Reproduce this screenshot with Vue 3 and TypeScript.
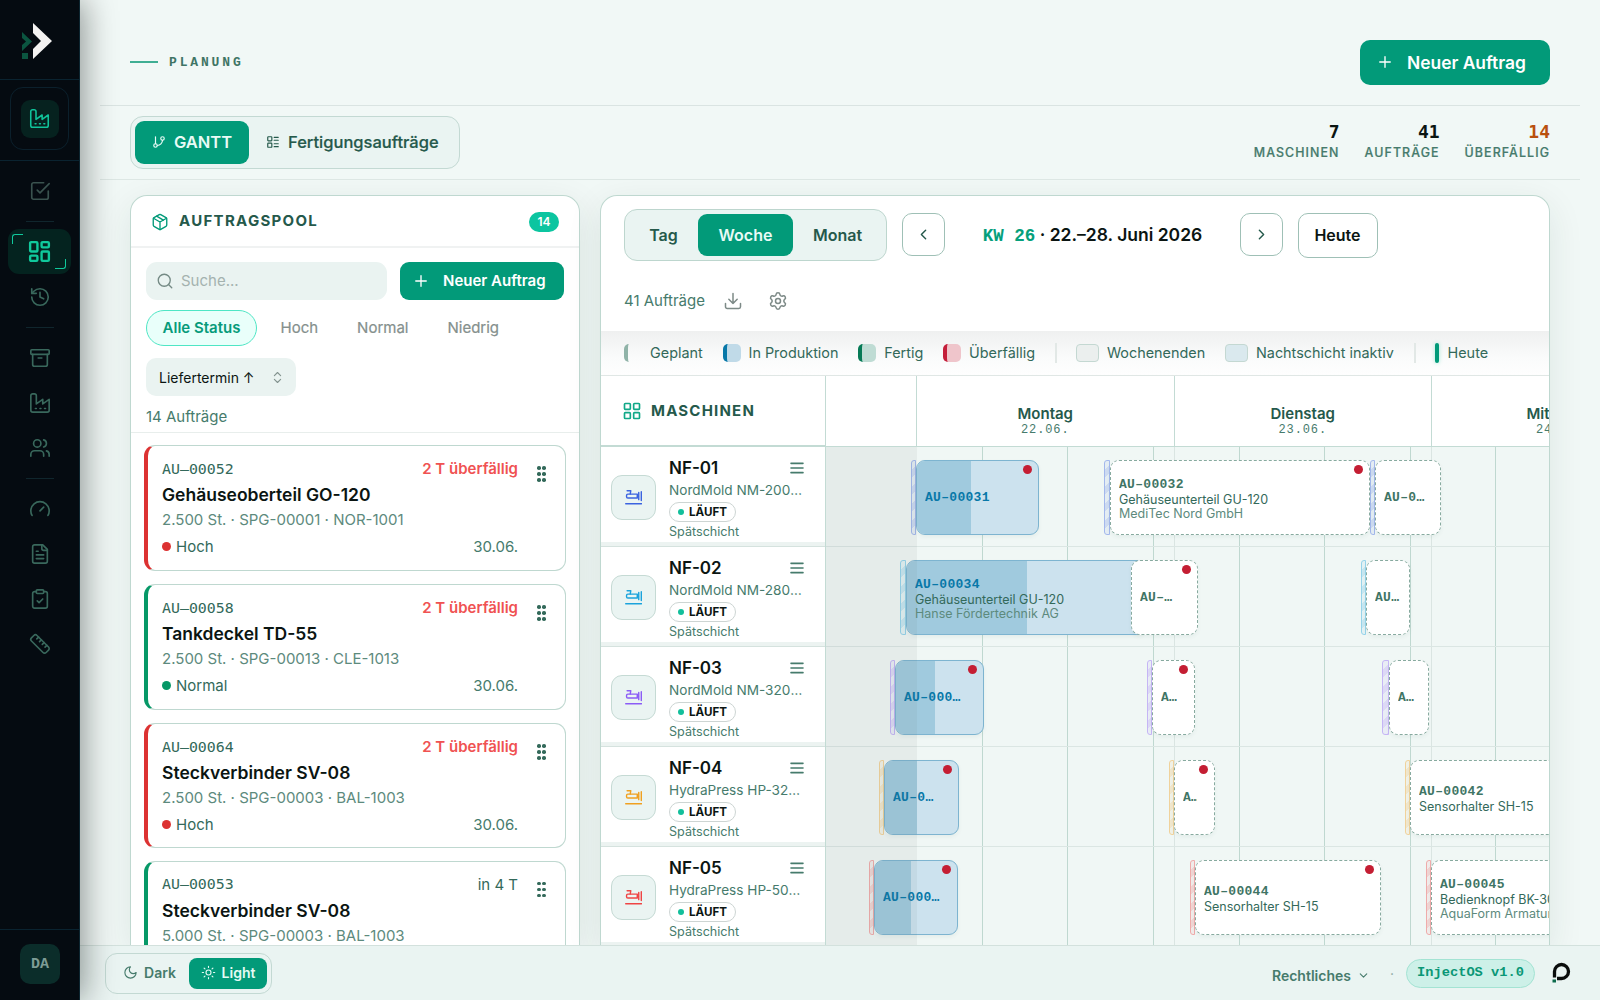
<script setup lang="ts">
import { h, type FunctionalComponent } from 'vue'

const ICONS: Record<string, string> = {
  check: '<path d="m9 11 3 3L22 4"/><path d="M21 12v7a2 2 0 0 1-2 2H5a2 2 0 0 1-2-2V5a2 2 0 0 1 2-2h11"/>',
  board: '<rect x="3" y="3" width="7" height="9" rx="1"/><rect x="14" y="3" width="7" height="5" rx="1"/><rect x="14" y="12" width="7" height="9" rx="1"/><rect x="3" y="16" width="7" height="5" rx="1"/>',
  history: '<path d="M3 12a9 9 0 1 0 9-9 9.75 9.75 0 0 0-6.74 2.74L3 8"/><path d="M3 3v5h5"/><path d="M12 7v5l4 2"/>',
  archive: '<rect x="2" y="3" width="20" height="5" rx="1"/><path d="M4 8v11a2 2 0 0 0 2 2h12a2 2 0 0 0 2-2V8"/><path d="M10 12h4"/>',
  factory: '<path d="M2 20a2 2 0 0 0 2 2h16a2 2 0 0 0 2-2V8l-7 5V8l-7 5V4a2 2 0 0 0-2-2H4a2 2 0 0 0-2 2Z"/><path d="M17 18h1M12 18h1M7 18h1"/>',
  users: '<path d="M16 21v-2a4 4 0 0 0-4-4H6a4 4 0 0 0-4 4v2"/><circle cx="9" cy="7" r="4"/><path d="M22 21v-2a4 4 0 0 0-3-3.87"/><path d="M16 3.13a4 4 0 0 1 0 7.75"/>',
  gauge: '<path d="m12 14 4-4"/><path d="M3.34 19a10 10 0 1 1 17.32 0"/>',
  file: '<path d="M15 2H6a2 2 0 0 0-2 2v16a2 2 0 0 0 2 2h12a2 2 0 0 0 2-2V7Z"/><path d="M14 2v4a2 2 0 0 0 2 2h4"/><path d="M10 9H8M16 13H8M16 17H8"/>',
  clipboard: '<rect x="8" y="2" width="8" height="4" rx="1"/><path d="M16 4h2a2 2 0 0 1 2 2v14a2 2 0 0 1-2 2H6a2 2 0 0 1-2-2V6a2 2 0 0 1 2-2h2"/><path d="m9 14 2 2 4-4"/>',
  ruler: '<path d="M21.3 15.3a2.4 2.4 0 0 1 0 3.4l-2.6 2.6a2.4 2.4 0 0 1-3.4 0L2.7 8.7a2.41 2.41 0 0 1 0-3.4l2.6-2.6a2.41 2.41 0 0 1 3.4 0Z"/><path d="m14.5 12.5 2-2M11.5 9.5l2-2M8.5 6.5l2-2M17.5 15.5l2-2"/>',
  branch: '<path d="M6 3v12"/><circle cx="18" cy="6" r="3"/><circle cx="6" cy="18" r="3"/><path d="M18 9a9 9 0 0 1-9 9"/>',
  list: '<rect x="3" y="3" width="7" height="7" rx="1"/><rect x="3" y="14" width="7" height="7" rx="1"/><path d="M14 4h7M14 9h7M14 15h7M14 20h7"/>',
  box: '<path d="m7.5 4.27 9 5.15"/><path d="M21 8a2 2 0 0 0-1-1.73l-7-4a2 2 0 0 0-2 0l-7 4A2 2 0 0 0 3 8v8a2 2 0 0 0 1 1.73l7 4a2 2 0 0 0 2 0l7-4A2 2 0 0 0 21 16Z"/><path d="m3.3 7 8.7 5 8.7-5M12 22V12"/>',
  search: '<circle cx="11" cy="11" r="8"/><path d="m21 21-4.3-4.3"/>',
  plus: '<path d="M5 12h14M12 5v14"/>',
  updown: '<path d="m7 15 5 5 5-5M7 9l5-5 5 5"/>',
  left: '<path d="m15 18-6-6 6-6"/>',
  right: '<path d="m9 18 6-6-6-6"/>',
  down: '<path d="m6 9 6 6 6-6"/>',
  download: '<path d="M21 15v4a2 2 0 0 1-2 2H5a2 2 0 0 1-2-2v-4"/><path d="m7 10 5 5 5-5M12 15V3"/>',
  gear: '<path d="M9.671 4.136a2.34 2.34 0 0 1 4.659 0 2.34 2.34 0 0 0 3.319 1.915 2.34 2.34 0 0 1 2.33 4.033 2.34 2.34 0 0 0 0 3.831 2.34 2.34 0 0 1-2.33 4.033 2.34 2.34 0 0 0-3.319 1.915 2.34 2.34 0 0 1-4.659 0 2.34 2.34 0 0 0-3.32-1.915 2.34 2.34 0 0 1-2.33-4.033 2.34 2.34 0 0 0 0-3.831A2.34 2.34 0 0 1 6.35 6.051a2.34 2.34 0 0 0 3.319-1.915"/><circle cx="12" cy="12" r="3"/>',
  grid: '<rect x="3" y="3" width="7" height="7" rx="1"/><rect x="14" y="3" width="7" height="7" rx="1"/><rect x="14" y="14" width="7" height="7" rx="1"/><rect x="3" y="14" width="7" height="7" rx="1"/>',
  menu: '<path d="M3 5h18M3 12h18M3 19h18"/>',
  moon: '<path d="M12 3a6 6 0 0 0 9 9 9 9 0 1 1-9-9Z"/>',
  sun: '<circle cx="12" cy="12" r="4"/><path d="M12 2v2M12 20v2M4.93 4.93l1.41 1.41M17.66 17.66l1.41 1.41M2 12h2M20 12h2M6.34 17.66l-1.41 1.41M19.07 4.93l-1.41 1.41"/>',
  press: '<path d="M3 2.4h5.2l-.8 4.6"/><path d="M17.4 7.200H4a1.800 1.800 0 0 0-1.800 1.800v1.800A1.800 1.800 0 0 0 4 12.600h13.400z"/><path d="M17.400 10h2.200M19.400 5v10M23 3.800v12.400M1 20.800h22.400"/>'
}

const Icon: FunctionalComponent<{ name: string; size?: number; weight?: number }> = (p) =>
  h('svg', {
    width: p.size ?? 20, height: p.size ?? 20, viewBox: '0 0 24 24', fill: 'none', stroke: 'currentColor',
    'stroke-width': p.weight ?? 2, 'stroke-linecap': 'round', 'stroke-linejoin': 'round', innerHTML: ICONS[p.name]
  })
Icon.props = ['name', 'size', 'weight']

const navGroups = [['check'], ['board', 'history'], ['archive', 'factory', 'users'], ['gauge', 'file', 'clipboard', 'ruler']]

const stats = [
  { value: '7', label: 'MASCHINEN', warn: false },
  { value: '41', label: 'AUFTRÄGE', warn: false },
  { value: '14', label: 'ÜBERFÄLLIG', warn: true }
]

interface Order { id: string; due: string; late: boolean; name: string; meta: string; prio: string; date: string }
const orders: Order[] = [
  { id: 'AU–00052', due: '2 T überfällig', late: true, name: 'Gehäuseoberteil GO-120', meta: '2.500 St. · SPG-00001 · NOR-1001', prio: 'Hoch', date: '30.06.' },
  { id: 'AU–00058', due: '2 T überfällig', late: true, name: 'Tankdeckel TD-55', meta: '2.500 St. · SPG-00013 · CLE-1013', prio: 'Normal', date: '30.06.' },
  { id: 'AU–00064', due: '2 T überfällig', late: true, name: 'Steckverbinder SV-08', meta: '2.500 St. · SPG-00003 · BAL-1003', prio: 'Hoch', date: '30.06.' },
  { id: 'AU–00053', due: 'in 4 T', late: false, name: 'Steckverbinder SV-08', meta: '5.000 St. · SPG-00003 · BAL-1003', prio: 'Normal', date: '' }
]

/* Horizontal values are pixels on the time axis, counted from its left edge. */
interface Bar { x: number; w: number; pre: number; id: string; name?: string; client?: string; done?: number; dot?: boolean }
interface Machine { id: string; model: string; color: string; bars: Bar[] }
const machines: Machine[] = [
  { id: 'NF-01', model: 'NordMold NM-200 S', color: '#3b63e0', bars: [
    { x: 90, w: 123, pre: 5, id: 'AU–00031', done: 54, dot: true },
    { x: 284, w: 260, pre: 6, id: 'AU–00032', name: 'Gehäuseunterteil GU-120', client: 'MediTec Nord GmbH', dot: true },
    { x: 549, w: 66, pre: 5, id: 'AU–00033' }] },
  { id: 'NF-02', model: 'NordMold NM-280 S', color: '#1ba3dc', bars: [
    { x: 80, w: 240, pre: 6, id: 'AU–00034', name: 'Gehäuseunterteil GU-120', client: 'Hanse Fördertechnik AG', done: 120 },
    { x: 305, w: 67, pre: 0, id: 'AU–00035', dot: true },
    { x: 540, w: 44, pre: 5, id: 'AU–00036' }] },
  { id: 'NF-03', model: 'NordMold NM-320 S', color: '#8b5cf6', bars: [
    { x: 69, w: 89, pre: 5, id: 'AU–00037', done: 39, dot: true },
    { x: 326, w: 43, pre: 5, id: 'AU–00038', dot: true },
    { x: 563, w: 40, pre: 7, id: 'AU–00039' }] },
  { id: 'NF-04', model: 'HydraPress HP-320', color: '#f0a020', bars: [
    { x: 58, w: 75, pre: 5, id: 'AU–00040', done: 32, dot: true },
    { x: 348, w: 41, pre: 5, id: 'AU–00041', dot: true },
    { x: 584, w: 220, pre: 5, id: 'AU–00042', name: 'Sensorhalter SH-15' }] },
  { id: 'NF-05', model: 'HydraPress HP-500', color: '#ef4444', bars: [
    { x: 48, w: 84, pre: 5, id: 'AU–00043', done: 36, dot: true },
    { x: 369, w: 186, pre: 5, id: 'AU–00044', name: 'Sensorhalter SH-15', dot: true },
    { x: 605, w: 220, pre: 5, id: 'AU–00045', name: 'Bedienknopf BK-30', client: 'AquaForm Armaturen' }] }
]
const shiftLines = [156, 241, 327, 413, 498, 584, 669]
const dayLines = [348, 605]
const px = (n: number) => n + 'px'
</script>

<template>
  <div class="app">
    <aside class="side">
      <div class="logo">
        <svg width="32" height="38" viewBox="0 0 32 38">
          <path d="M12 1v10l8 8-8 8v10l19-18z" fill="#f4f3f2" />
          <path d="M1 10v6l4 3.500-4 3.500v6l10-9.500z" fill="#0b5540" />
          <path d="M1 31h6v6H1z" fill="#0b5540" />
        </svg>
      </div>
      <div class="plant"><div class="plant-box"><div class="plant-tile"><Icon name="factory" :size="21" :weight="1.8" /></div></div></div>
      <nav>
        <template v-for="(g, gi) in navGroups" :key="gi">
          <i v-if="gi" class="sep" />
          <a v-for="n in g" :key="n" :class="['nav', { on: n === 'board' }]"><Icon :name="n" :size="n === 'board' ? 25 : 22" :weight="n === 'board' ? 2.3 : 1.8" /></a>
        </template>
      </nav>
      <div class="user"><div class="avatar">DA</div></div>
    </aside>

    <div class="page">
      <header class="head">
        <div class="crumb"><i />PLANUNG</div>
        <button class="primary big"><Icon name="plus" :size="18" :weight="1.8" />Neuer Auftrag</button>
      </header>
      <section class="tabs-row">
        <div class="seg tabs">
          <button class="on"><Icon name="branch" :size="14" />GANTT</button>
          <button><Icon name="list" :size="14" />Fertigungsaufträge</button>
        </div>
        <div class="stats">
          <div v-for="s in stats" :key="s.label" :class="['stat', { warn: s.warn }]"><b>{{ s.value }}</b><span>{{ s.label }}</span></div>
        </div>
      </section>

      <main class="work">
        <section class="card pool">
          <div class="pool-head"><Icon name="box" :size="18" :weight="1.8" /><h2>AUFTRAGSPOOL</h2><span class="badge">14</span></div>
          <div class="filters">
            <div class="line">
              <div class="search"><Icon name="search" :size="18" :weight="1.8" /><span>Suche...</span></div>
              <button class="primary small"><Icon name="plus" :size="18" :weight="1.8" />Neuer Auftrag</button>
            </div>
            <div class="chips"><span class="on">Alle Status</span><span>Hoch</span><span>Normal</span><span>Niedrig</span></div>
            <div class="select">Liefertermin ↑<Icon name="updown" :size="15" :weight="1.8" /></div>
            <div class="count">14 Aufträge</div>
          </div>
          <div class="orders">
            <article v-for="o in orders" :key="o.id" :class="['order', { high: o.prio === 'Hoch' }]">
              <div class="o-main">
                <div class="o-row"><code>{{ o.id }}</code><span :class="['due', { overdue: o.late }]">{{ o.due }}</span></div>
                <h3>{{ o.name }}</h3>
                <p>{{ o.meta }}</p>
                <div v-if="o.date" class="o-row foot"><span class="prio"><i />{{ o.prio }}</span><span class="date">{{ o.date }}</span></div>
              </div>
              <div class="grip"><i v-for="d in 6" :key="d" /></div>
            </article>
          </div>
        </section>

        <section class="card gantt">
          <div class="bar-top">
            <div class="seg range"><button>Tag</button><button class="on">Woche</button><button>Monat</button></div>
            <button class="ghost sq"><Icon name="left" :size="17" /></button>
            <div class="period"><b>KW 26</b>&nbsp;· 22.–28. Juni 2026</div>
            <button class="ghost sq"><Icon name="right" :size="17" /></button>
            <button class="ghost today">Heute</button>
          </div>
          <div class="bar-sub">41 Aufträge<Icon name="download" :size="20" :weight="1.8" /><Icon name="gear" :size="20" :weight="1.8" /></div>
          <div class="legend">
            <i class="sw plan" /><span>Geplant</span>
            <i class="sw prod" /><span>In Produktion</span>
            <i class="sw done" /><span>Fertig</span>
            <i class="sw late" /><span>Überfällig</span>
            <i class="div" />
            <i class="sw wk" /><span>Wochenenden</span>
            <i class="sw night" /><span>Nachtschicht inaktiv</span>
            <i class="div" />
            <i class="now" /><span>Heute</span>
          </div>
          <div class="cols">
            <div class="m-head"><Icon name="grid" :size="20" :weight="2" /><h2>MASCHINEN</h2></div>
            <div class="days">
              <div class="day stub" />
              <div class="day"><b>Montag</b><span>22.06.</span></div>
              <div class="day"><b>Dienstag</b><span>23.06.</span></div>
              <div class="day"><b>Mittwoch</b><span>24.06.</span></div>
            </div>
          </div>
          <div class="body">
            <div class="m-col">
              <div v-for="m in machines" :key="m.id" class="machine">
                <div class="m-icon" :style="{ color: m.color }"><Icon name="press" :size="17" :weight="2" /></div>
                <div class="m-info">
                  <div class="m-top"><strong>{{ m.id }}</strong><Icon name="menu" :size="16" :weight="2.4" /></div>
                  <div class="model">{{ m.model }} hydraulisch</div>
                  <span class="state"><i />LÄUFT</span>
                  <div class="shift">Spätschicht</div>
                </div>
              </div>
            </div>
            <div class="lanes">
              <i v-for="l in shiftLines" :key="l" class="v" :style="{ left: px(l) }" />
              <i v-for="l in dayLines" :key="l" class="v soft" :style="{ left: px(l) }" />
              <div v-for="m in machines" :key="m.id" class="lane">
                <template v-for="b in m.bars" :key="b.id">
                  <i v-if="b.pre" class="setup" :style="{ left: px(b.x - b.pre), width: px(b.pre), color: m.color }" />
                  <div :class="['task', { run: b.done, full: b.name, flagged: b.dot }]" :style="{ left: px(b.x), width: px(b.w) }">
                    <i v-if="b.done" class="progress" :style="{ width: px(b.done) }" />
                    <b>{{ b.id }}</b>
                    <span v-if="b.name" class="t-name">{{ b.name }}</span>
                    <span v-if="b.client" class="t-client">{{ b.client }}</span>
                    <i v-if="b.dot" class="dot" />
                  </div>
                </template>
              </div>
              <i class="weekend" />
            </div>
          </div>
        </section>
      </main>

      <footer class="bottom">
        <div class="theme">
          <button><Icon name="moon" :size="15" :weight="1.8" />Dark</button>
          <button class="on"><Icon name="sun" :size="15" :weight="1.8" />Light</button>
        </div>
        <div class="legal">Rechtliches<Icon name="down" :size="13" /></div>
        <span class="mid">·</span>
        <span class="version">InjectOS v1.0</span>
        <svg class="mark" width="20" height="22" viewBox="0 0 20 22" fill="none">
          <path d="M3.500 15.500V9.500a7 7 0 1 1 7 7H6" stroke="#0a0d0c" stroke-width="3.300" />
          <path d="M1.500 17.500h3.500v3H1.500z" fill="#0d6b4c" />
        </svg>
      </footer>
    </div>
  </div>
</template>

<style>
body { margin: 0; overflow: hidden; }
</style>

<style scoped>
* { box-sizing: border-box; }
.app { display: flex; width: 1600px; height: 1000px; overflow: hidden; font-family: Inter, "Noto Sans", sans-serif; color: #0b1512; background: #f1f8f6; }
button { font: inherit; border: 0; margin: 0; padding: 0; background: none; color: inherit; display: flex; align-items: center; justify-content: center; white-space: nowrap; }
svg { flex: none; display: block; }
h2, h3, p { margin: 0; }
i { display: block; flex: none; font-style: normal; }

.side { width: 80px; flex: none; display: flex; flex-direction: column; background: #050b11; border-right: 1px solid #0c2530; box-shadow: 4px 0 32px rgba(0, 10, 8, .42); position: relative; z-index: 3; }
.logo { height: 80px; padding: 22px 0 0 21px; border-bottom: 1px solid #0a2330; }
.plant { height: 81px; padding: 7px 10px; border-bottom: 1px solid #0a2330; }
.plant-box { width: 59px; height: 63px; border: 1px solid #0b202c; border-radius: 13px; display: grid; place-items: center; }
.plant-tile { width: 38px; height: 38px; border-radius: 9px; background: #06221f; color: #10c39a; display: grid; place-items: center; }
nav { display: flex; flex-direction: column; align-items: center; padding-top: 7px; }
.nav { width: 63px; height: 45px; display: grid; place-items: center; color: #39685c; }
.nav:first-child { color: #3a534f; }
.nav.on { color: #10c99c; background: #04231f; border-radius: 11px; position: relative; }
.nav.on::before, .nav.on::after { content: ""; position: absolute; width: 10px; height: 9px; border: 1px solid #10c99c; }
.nav.on::before { left: 4px; top: 5px; border-right: 0; border-bottom: 0; border-top-left-radius: 3px; }
.nav.on::after { right: 5px; bottom: 5px; border-left: 0; border-top: 0; border-bottom-right-radius: 3px; }
.sep { width: 28px; height: 1px; background: #10262d; margin: 8px 0 7px; }
.user { margin-top: auto; height: 71px; border-top: 1px solid #0a2330; padding: 14px 20px; }
.avatar { width: 40px; height: 40px; border-radius: 10px; background: #0b2d2a; color: #7d9c95; font: bold 15px "Liberation Mono", monospace; display: grid; place-items: center; }

.page { flex: 1; min-width: 0; display: flex; flex-direction: column; }
.head { height: 106px; flex: none; margin: 0 20px; padding: 19px 30px 0; display: flex; align-items: center; justify-content: space-between; border-bottom: 1px solid #dae4e2; }
.crumb { display: flex; align-items: center; gap: 11px; font: bold 13px "Liberation Mono", monospace; letter-spacing: 2.850px; color: #3f7565; }
.crumb i { width: 28px; height: 2px; background: #3fae93; }
.primary { background: #029a79; color: #fff; font-weight: 600; border-radius: 9px; justify-content: flex-start; }
.big { width: 190px; height: 45px; font-size: 17.400px; gap: 13px; padding-left: 16px; border-radius: 10px; }
.tabs-row { height: 74px; flex: none; margin: 0 20px; padding: 0 30px; display: flex; align-items: center; justify-content: space-between; border-bottom: 1px solid #dde7e4; }
.seg { display: flex; border: 1px solid #bdd6ce; background: #eaf4f2; color: #25594b; font-weight: 600; border-radius: 13px; padding: 4px; }
.seg .on { background: #029a79; color: #e9fbf6; border-radius: 9px; }
.tabs { width: 330px; height: 53px; font-size: 16.500px; margin-top: -1px; border-color: #c3d9d3; }
.tabs button { gap: 8px; padding: 0 0 0 17px; font-weight: 500; -webkit-text-stroke: .2px; }
.tabs .on { width: 114px; flex: none; padding: 0; font-weight: 600; -webkit-text-stroke: 0; }
.stats { display: flex; gap: 25px; margin-top: -3px; }
.stat { display: flex; flex-direction: column; align-items: flex-end; }
.stat b { font: bold 18px/23px "DejaVu Sans Mono", monospace; }
.stat span { font-size: 12.400px; line-height: 19px; font-weight: 500; letter-spacing: 1.100px; color: #467b6c; -webkit-text-stroke: .2px; }
.stat.warn b { color: #b9500e; }

.work { flex: 1; min-height: 0; padding: 15px 50px 0; display: flex; gap: 20px; overflow: hidden; }
.card { background: #fff; border: 1px solid #bfd8d0; border-bottom: 0; border-radius: 17px 17px 0 0; box-shadow: 0 10px 36px rgba(20, 50, 40, .09); overflow: hidden; }
.pool { width: 450px; flex: none; display: flex; flex-direction: column; }
.pool-head { height: 52px; flex: none; display: flex; align-items: center; padding: 1px 20px 0; color: #029a79; border-bottom: 2px solid #f0f2f2; }
h2 { font-size: 15px; font-weight: 700; letter-spacing: 1.300px; color: #25594b; }
.pool-head h2 { margin-left: 10px; transform: translateY(-1px); }
.badge { margin-left: auto; width: 30px; height: 20px; border-radius: 10px; background: #0cc5a0; color: #fff; font-size: 12px; font-weight: 600; display: grid; place-items: center; }
.filters { height: 185px; flex: none; padding: 14px 15px 0; border-bottom: 1px solid #e8eeec; }
.line { display: flex; gap: 13px; }
.search { flex: 1; height: 38px; border-radius: 11px; background: #eaf3f1; color: #a4b2af; font-size: 15px; display: flex; align-items: center; gap: 7px; padding-left: 10px; }
.search span { padding-bottom: 2px; }
.search svg { color: #758a85; }
.small { width: 164px; height: 38px; font-size: 15px; gap: 13px; font-weight: 600; padding: 0 0 1px 12px; }
.chips { display: flex; margin-top: 10px; height: 36px; font-size: 15px; color: #85908d; }
.chips span { padding: 0 19.500px 2px; display: flex; align-items: center; -webkit-text-stroke: .2px; }
.chips span.on { width: 111px; margin-right: 4px; padding: 0 0 2px; justify-content: center; border: 1px solid #4fe6c5; background: #e9fffa; color: #079b7a; border-radius: 18px; font-weight: 600; -webkit-text-stroke: 0; }
.select { width: 150px; height: 38px; margin-top: 12px; border-radius: 10px; background: #eaf3f1; font-size: 14px; display: flex; align-items: center; justify-content: space-between; padding: 0 11px 0 13px; }
.select svg { color: #83938f; }
.count { font-size: 15px; color: #467b6c; margin-top: 11px; line-height: 20px; }
.orders { flex: 1; padding: 12px 13px 0; display: flex; flex-direction: column; gap: 13px; overflow: hidden; }
.order { height: 126px; flex: none; border: 1px solid #bfd8d0; border-left: 4px solid #069867; border-radius: 11px; padding: 12px 20px 0 14px; display: flex; }
.order:nth-child(3) { height: 124.500px; }
.order.high { border-left-color: #dc3232; }
.o-main { width: 356px; }
.o-row { display: flex; justify-content: space-between; align-items: center; height: 22px; padding-bottom: 1px; font-size: 15px; color: #33695a; }
.o-row code { font: 14.900px "DejaVu Sans Mono", monospace; color: #33695a; }
.due.overdue { color: #f05252; font-weight: 600; }
h3 { font-size: 17.500px; line-height: 30px; font-weight: 600; height: 29px; }
.order p { font-size: 15px; line-height: 22px; color: #5d8a7d; height: 23px; }
.foot { height: 29px; }
.prio { display: flex; align-items: center; gap: 5px; }
.prio i { width: 9px; height: 9px; border-radius: 50%; background: #069867; margin-top: 1px; }
.high .prio i { background: #dc3232; }
.date { color: #467b6c; }
.grip { display: grid; grid-template-columns: 3px 3px; grid-auto-rows: 3px; gap: 3px 2px; margin: 8px 0 0 19px; height: 16px; }
.grip i { width: 3.500px; height: 3.500px; border-radius: 50%; background: #33695a; }

.gantt { flex: 1; min-width: 0; display: flex; flex-direction: column; }
.bar-top { height: 79px; flex: none; display: flex; align-items: flex-start; padding: 13px 23px 0; }
.range { width: 263px; height: 52px; font-size: 16px; }
.range button { width: 69px; flex: none; }
.range .on { width: 95px; }
.range button:last-child { width: 89px; }
.ghost { border: 1px solid #9fc0b6; border-radius: 10px; background: #fff; margin-top: 4px; }
.sq { width: 43px; height: 43px; margin-left: 15px; color: #25594b; }
.period { width: 295px; text-align: center; font-size: 17.500px; font-weight: 600; line-height: 52px; height: 52px; white-space: nowrap; margin-right: -15px; }
.period b { font: bold 17.500px "Liberation Mono", monospace; color: #06a07c; }
.today { width: 80px; height: 45px; margin-left: 14.500px; font-size: 16px; font-weight: 600; padding-bottom: 1px; }
.bar-sub { height: 56px; flex: none; display: flex; align-items: flex-start; gap: 25px; padding: 16px 23px 0; font-size: 15px; line-height: 20px; color: #467b6c; }
.bar-sub svg { color: #7d8a87; }
.bar-sub svg:first-of-type { margin-left: -7px; }
.legend { height: 45px; flex: none; display: flex; align-items: center; padding: 0 23px; font-size: 14.400px; color: #33695a; background: linear-gradient(#eff0f0, #fafbfb 60%, #fefefe); border-bottom: 1px solid #e0e7e5; white-space: nowrap; }
.sw { width: 18px; height: 18px; border-radius: 5px; margin-right: 8px; }
.legend span { margin-right: 19.800px; padding-bottom: 2px; }
.plan { border-left: 4px solid #90b3a8; }
.prod { border-left: 4px solid #0878a8; background: #c0dae8; }
.done { border-left: 4px solid #067a56; background: #bfdcd4; }
.late { border-left: 4px solid #c41e3a; background: #efc5cb; }
.wk, .night { width: 23px; border: 1px solid #c4d8d2; background: #ebefee; border-radius: 4px; }
.night { background: #dae9ee; }
.div { width: 2px; height: 20px; background: #e2e8e6; margin-right: 19px; }
.now { width: 4px; height: 20px; border-radius: 2px; background: #029a79; margin-right: 9px; box-shadow: 0 0 4px #a6e8d8; }
.cols { height: 71px; flex: none; display: flex; background: #fff; }
.m-head { width: 225px; flex: none; display: flex; align-items: center; gap: 9px; padding: 1px 0 0 21px; color: #10a888; border-right: 1px solid #c3dbd4; border-bottom: 2px solid #c3dbd4; }
.m-head h2 { transform: translateY(-1px); letter-spacing: 1.200px; }
.days { flex: 1; min-width: 0; display: flex; overflow: hidden; border-bottom: 1px solid #c3dbd4; }
.day { width: 257.500px; flex: none; border-right: 1px solid #c3dbd4; display: flex; flex-direction: column; align-items: center; padding-top: 28px; }
.stub { width: 91px; }
.day b { font-size: 15px; line-height: 19px; font-weight: 600; color: #25594b; }
.day span { font: 12px/14px "Liberation Mono", monospace; letter-spacing: .9px; color: #467b6c; }

.body { flex: 1; min-height: 0; display: flex; overflow: hidden; background: #f0f7f5; }
.m-col { width: 225px; flex: none; border-right: 1px solid #c3dbd4; }
.machine { height: 100px; display: flex; align-items: center; padding: 2px 21px 0 10px; background: #fff; border-bottom: 1px solid #d5e2de; box-shadow: inset 0 -4px #ecf3f1; }
.m-icon { width: 45px; height: 45px; flex: none; border: 1px solid #c5dad4; border-radius: 11px; background: #eaf4f2; display: grid; place-items: center; margin-right: 13px; }
.m-info { width: 136px; height: 84px; }
.m-top { display: flex; justify-content: space-between; align-items: center; height: 24px; color: #467b6c; }
.m-top strong { font-size: 17px; font-weight: 600; color: #0b1512; }
.model { font-size: 13.600px; line-height: 21px; height: 22px; color: #467b6c; overflow: hidden; text-overflow: ellipsis; white-space: nowrap; }
.state { width: 67px; height: 20px; border: 1px solid #cdd5d3; border-radius: 10px; display: flex; align-items: center; font-size: 11.600px; font-weight: 700; gap: 5px; padding-left: 8px; }
.state i { width: 6px; height: 6px; border-radius: 50%; background: #12bf9b; }
.shift { font-size: 12.600px; line-height: 18px; color: #467b6c; margin-top: 1px; }

.lanes { flex: 1; min-width: 0; position: relative; overflow: hidden; }
.lane { height: 100px; border-bottom: 1px solid #dbe6e3; position: relative; }
.v { position: absolute; top: 0; bottom: 0; width: 1px; background: #bfd8d0; }
.v.soft { background: #dae5e2; }
.weekend { position: absolute; top: 0; bottom: 0; left: 0; width: 91px; background: rgba(90, 110, 104, .075); }
.setup { position: absolute; top: 13px; height: 75px; border: 1px solid; border-radius: 3px 0 0 3px; opacity: .42; background: repeating-linear-gradient(135deg, color-mix(in srgb, currentColor 15%, transparent) 0 6px, color-mix(in srgb, currentColor 45%, transparent) 6px 12px); }
.task { position: absolute; top: 13px; height: 75px; border: 1px dashed #87aa9f; border-radius: 9px; background: #fff; padding: 0 8px; display: flex; flex-direction: column; justify-content: center; overflow: hidden; white-space: nowrap; box-shadow: 0 2px 4px rgba(40, 90, 70, .06); }
.task.run { border: 1px solid #7db4d0; background: #cce2ee; }
.task.flagged { padding-right: 17.500px; }
.task.full { padding-top: 2.500px; }
.task b { font: bold 13px/15px "Liberation Mono", monospace; letter-spacing: .3px; color: #3f7565; overflow: hidden; text-overflow: ellipsis; position: relative; }
.task.run b { color: #0878a8; }
.t-name, .t-client { font-size: 12.500px; line-height: 14px; color: #33695a; position: relative; }
.t-name { margin-top: 1px; }
.t-client { color: #5d8a7d; }
.progress { position: absolute; left: 0; top: 0; bottom: 0; background: #a0cade; }
.dot { position: absolute; top: 4px; right: 6px; width: 9px; height: 9px; border-radius: 50%; background: #c41e33; }

.bottom { height: 55px; flex: none; border-top: 1px solid #d3e1dd; background: #eaf4f2; display: flex; align-items: center; padding: 0 29px 0 25px; font-size: 14px; position: relative; z-index: 1; }
.theme { width: 167px; height: 41px; border: 1px solid #c3d9d3; border-radius: 12px; padding: 4px; display: flex; font-weight: 600; color: #467b6c; margin-right: auto; }
.theme button { width: 79px; flex: none; gap: 6px; padding-bottom: 1px; }
.theme .on { width: 78px; background: #029a79; color: #e4faf4; border-radius: 8px; }
.legal { display: flex; align-items: center; gap: 6px; font-weight: 600; color: #467b6c; margin-top: 4px; }
.mid { margin: 0 12px 0 20px; color: #8aa79f; }
.version { width: 129px; height: 29px; border: 1px solid #a3e3d3; border-radius: 15px; background: #cdf0e8; color: #0a9776; font: bold 13.700px "Liberation Mono", monospace; display: grid; place-items: center; padding-bottom: 2px; margin-right: 16px; }
</style>
